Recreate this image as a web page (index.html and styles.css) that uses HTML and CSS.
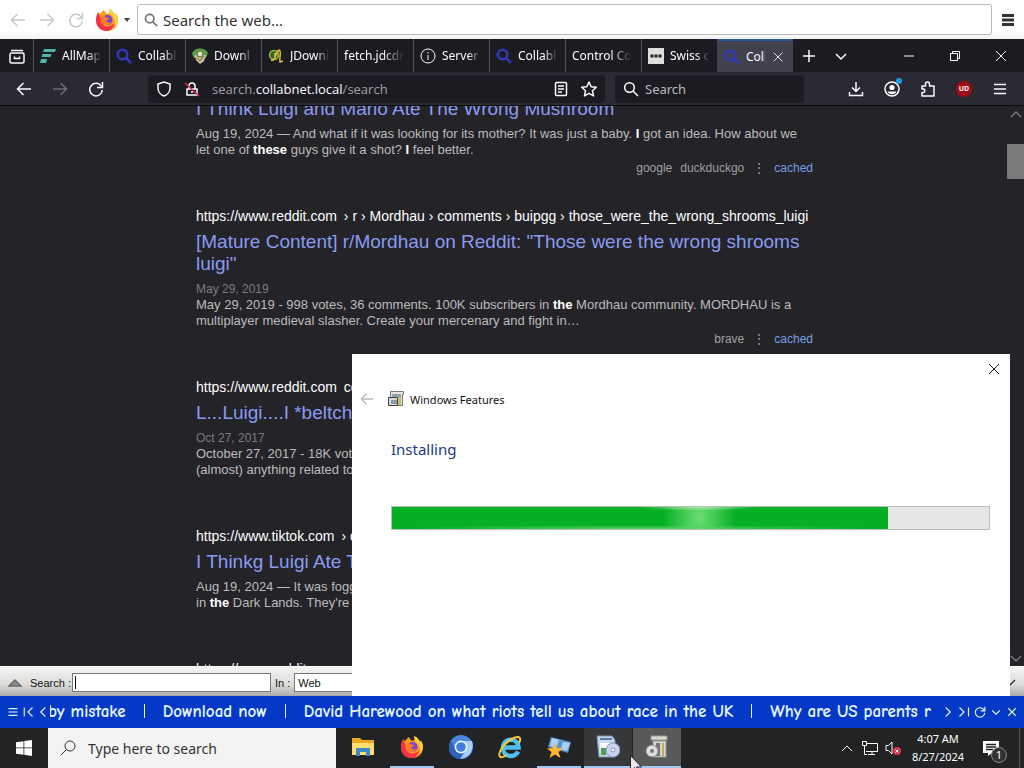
FILE: index.html
```html
<!DOCTYPE html>
<html lang="en">
<head>
    <meta charset="UTF-8">
    <meta name="viewport" content="width=device-width, initial-scale=1.0">
    <title>Desktop</title>
    <link rel="stylesheet" href="styles.css">
</head>
<body>

    <!-- shared icons -->
    <svg class="defs" aria-hidden="true">
        <symbol id="i-back" viewBox="0 0 16 16"><path d="M15 8H1.5M7.5 2 1.5 8l6 6"/></symbol>
        <symbol id="i-forward" viewBox="0 0 16 16"><path d="M1 8h13.500M8.500 2l6 6-6 6"/></symbol>
        <symbol id="i-reload" viewBox="0 0 16 16"><path d="M13.500 5.500A6.300 6.300 0 1 0 14.300 9M14.500 1v5.500H9"/></symbol>
        <symbol id="i-search" viewBox="0 0 16 16"><circle cx="6.500" cy="6.500" r="4.800"/><path d="m10 10 5 5"/></symbol>
        <symbol id="i-down" viewBox="0 0 16 16"><path d="m3 6 5 5 5-5"/></symbol>
        <symbol id="i-up" viewBox="0 0 16 16"><path d="m3 11 5-5 5 5"/></symbol>
        <symbol id="i-close" viewBox="0 0 16 16"><path d="m3 3 10 10M13 3 3 13"/></symbol>
        <symbol id="i-menu" viewBox="0 0 16 16"><path d="M2 3.500h12M2 8h12M2 12.500h12"/></symbol>
        <symbol id="i-firefox" viewBox="0 0 24 24">
            <path fill="#ff9a1f" d="M12 23C5.500 23 1 18.500 1 12c0-3 1-6 2.500-8 .2 1 .6 1.700 1 2.200C6 4.500 7.500 3.800 8 2c2 1 2.500 2.500 3 3.500h3C15 4 14.500 2.500 14 1c4 1.500 5.500 4.500 6 6.500.6-.5.8-1.300.8-2C22.500 8 23 10 23 12c0 6.500-4.500 11-11 11z"/>
            <path fill="#ffd23a" d="M14 1c4 1.500 5.500 4.500 6 6.500.6-.5.8-1.300.8-2C23.500 9 23.500 15 20 19c1-5-1-10-4-12-1.500-2-1.500-4-2-6z"/>
            <path fill="#f5304a" d="M1 12c0-3 1-6 2.500-8 0 3 1.500 4 2 6-.5 6 4 9 8 8.500 3-.3 4.500-2 6-3C18 20 15.500 23 12 23 5.500 23 1 18.500 1 12z"/>
            <circle cx="12.500" cy="12" r="5" fill="#7545d8"/>
            <path fill="#ff7a24" d="M5 9c3-2 5-1 6.500.5 1.500.4 2.500 0 3 .5-.5 2-3 1.500-3.500 3 1.500 2 4 1.500 5.500.5C15 18 8 18 6.500 14 6 12 6 10.500 5 9z"/>
        </symbol>
    </svg>

    <div class="webbar">
        <button class="icon-btn faded" aria-label="Back"><svg><use href="#i-back"/></svg></button>
        <button class="icon-btn faded" aria-label="Forward"><svg><use href="#i-forward"/></svg></button>
        <button class="icon-btn faded" aria-label="Reload"><svg><use href="#i-reload"/></svg></button>
        <button class="engine" aria-label="Choose browser"><svg class="ff"><use href="#i-firefox"/></svg><span class="caret"></span></button>
        <div class="webbar-field">
            <svg><use href="#i-search"/></svg>
            <input type="text" aria-label="Search the web" placeholder="Search the web...">
        </div>
        <button class="icon-btn burger" aria-label="Menu"><svg><use href="#i-menu"/></svg></button>
    </div>

    <div class="tabs">
        <button class="firefox-view" aria-label="Firefox View"><svg viewBox="0 0 16 16"><rect x="1" y="5" width="14" height="10" rx="1.500"/><path d="M2 2.500h12M5.500 8.500v2h5v-2"/></svg></button>
        <button class="tab"><svg viewBox="0 0 16 16"><path fill="#50b5a5" stroke="none" d="M4 1h12l-1 3H3zM2.500 6h9l-1 3h-9zM1 11h6l-1 4H0z"/></svg><span>AllMap</span></button>
        <button class="tab"><svg class="blue"><use href="#i-search"/></svg><span>Collabl</span></button>
        <button class="tab"><svg viewBox="0 0 16 16"><path fill="#5c9c48" stroke="none" d="M0 6C2-1 13-1 16 5l-2 5H2z"/><path fill="#d4cab0" stroke="none" d="M3 7h11l-2 6-4 3-4-4z"/><circle cx="8" cy="6" r="3" fill="#e8e4d0" stroke="#6d8a4a"/><path d="m5 10 3 3 4-5" stroke="#a0764a"/></svg><span>Downl</span></button>
        <button class="tab"><svg viewBox="0 0 16 16"><circle cx="6" cy="7" r="4.500" fill="#326330" stroke="#9cb43e"/><path d="M3 12c5 2 4-8 8-10 3 1 0 7 1 12l3-1M7 5v5" stroke="#d8c632"/></svg><span>JDowni</span></button>
        <button class="tab"><span>fetch.jdcdn</span></button>
        <button class="tab"><svg class="thin" viewBox="0 0 16 16"><circle cx="8" cy="8" r="7"/><path d="M8 7v5M8 4v1.500"/></svg><span>Server</span></button>
        <button class="tab"><svg class="blue"><use href="#i-search"/></svg><span>Collabl</span></button>
        <button class="tab"><span>Control Co</span></button>
        <button class="tab"><svg viewBox="0 0 16 16"><path fill="#ddd" stroke="none" d="M0 0h16v16H0z"/><path stroke="#222" stroke-width="3" stroke-dasharray="3 1" d="M2.500 8h11"/></svg><span>Swiss c</span></button>
        <div class="tab active"><svg class="blue"><use href="#i-search"/></svg><span>Coll</span><button aria-label="Close tab"><svg><use href="#i-close"/></svg></button></div>
        <button class="tab-tool" aria-label="New tab"><svg viewBox="0 0 16 16"><path d="M8 2v12M2 8h12"/></svg></button>
        <button class="tab-tool" aria-label="List tabs"><svg><use href="#i-down"/></svg></button>
        <div class="window-btns">
            <button aria-label="Minimize"><svg viewBox="0 0 16 16"><path d="M3 8h10"/></svg></button>
            <button aria-label="Restore"><svg viewBox="0 0 16 16"><path d="M3.500 5.500h7v7h-7zM5.500 5V3.500h7v7H11"/></svg></button>
            <button aria-label="Close"><svg><use href="#i-close"/></svg></button>
        </div>
    </div>

    <div class="navbar">
        <button class="icon-btn" aria-label="Back"><svg><use href="#i-back"/></svg></button>
        <button class="icon-btn dim" aria-label="Forward"><svg><use href="#i-forward"/></svg></button>
        <button class="icon-btn" aria-label="Reload"><svg><use href="#i-reload"/></svg></button>
        <div class="urlbar">
            <svg viewBox="0 0 16 16"><path d="M8 1l6 2v4c0 4-3 7-6 8-3-1-6-4-6-8V3z"/></svg>
            <svg viewBox="0 0 16 16"><path d="M3 8h10v6H3zM5 8V5a3 3 0 0 1 6 0v3M8 10v2"/><path stroke="#e22850" d="m1 2 14 13"/></svg>
            <span class="url">search.<b>collabnet.local</b>/search</span>
            <svg viewBox="0 0 16 16"><rect x="2.500" y="1.500" width="11" height="13" rx="1"/><path d="M5 5h6M5 8h6M5 11h4"/></svg>
            <svg viewBox="0 0 16 16"><path stroke-linejoin="round" d="m8 1 2.200 4.700 5.100.6-3.800 3.500 1 5.100L8 12.400l-4.500 2.500 1-5.100L.7 6.300l5.100-.6z"/></svg>
        </div>
        <div class="quick">
            <svg><use href="#i-search"/></svg>
            <input type="text" aria-label="Search" placeholder="Search">
        </div>
        <div class="nav-tools">
            <button class="icon-btn" aria-label="Downloads"><svg viewBox="0 0 16 16"><path d="M8 1v9M4 6.500 8 10.500l4-4M1.500 11v3.500h13V11"/></svg></button>
            <button class="icon-btn" aria-label="Account"><svg viewBox="0 0 16 16"><circle cx="8" cy="8" r="7"/><circle cx="8" cy="6.500" r="2.600" fill="#fff" stroke="none"/><path fill="#fff" stroke="none" d="M3.500 10.500h9C11 14 5 14 3.500 10.500z"/></svg><span class="dot"></span></button>
            <button class="icon-btn" aria-label="Extensions"><svg viewBox="0 0 16 16"><path stroke-linejoin="round" d="M2 5h3.500V3a2 2 0 0 1 4 0v2H14v10H2v-3.500h1.500a1.800 1.800 0 0 0 0-3.500H2z"/></svg></button>
            <button class="icon-btn" aria-label="uBlock"><span class="ublock">UD</span></button>
            <button class="icon-btn" aria-label="Menu"><svg><use href="#i-menu"/></svg></button>
        </div>
    </div>

    <div class="page">
        <div class="results">
            <div class="result">
                <h3><a href="#">I Think Luigi and Mario Ate The Wrong Mushroom</a></h3>
                <p>Aug 19, 2024 — And what if it was looking for its mother? It was just a baby. <b>I</b> got an idea. How about we<br>let one of <b>these</b> guys give it a shot? <b>I</b> feel better.</p>
                <div class="engines"><span>google</span><span>duckduckgo</span><i>⋮</i><a href="#">cached</a></div>
            </div>
            <div class="result">
                <div class="link">https://www.reddit.com<span>› r › Mordhau › comments › buipgg › those_were_the_wrong_shrooms_luigi</span></div>
                <h3><a href="#">[Mature Content] r/Mordhau on Reddit: "Those were the wrong shrooms<br>luigi"</a></h3>
                <time>May 29, 2019</time>
                <p>May 29, 2019 - 998 votes, 36 comments. 100K subscribers in <b>the</b> Mordhau community. MORDHAU is a<br>multiplayer medieval slasher. Create your mercenary and fight in…</p>
                <div class="engines"><span>brave</span><i>⋮</i><a href="#">cached</a></div>
            </div>
            <div class="result">
                <div class="link">https://www.reddit.com<span>comments</span></div>
                <h3><a href="#">L...Luigi....I *beltch*</a></h3>
                <time>Oct 27, 2017</time>
                <p>October 27, 2017 - 18K votes<br>(almost) anything related to</p>
                <div class="engines"><span>brave</span><i>⋮</i><a href="#">cached</a></div>
            </div>
            <div class="result">
                <div class="link">https://www.tiktok.com<span>› discover</span></div>
                <h3><a href="#">I Thinkg Luigi Ate The</a></h3>
                <p>Aug 19, 2024 — It was foggy<br>in <b>the</b> Dark Lands. They're</p>
                <div class="engines"><span>google</span><i>⋮</i><a href="#">cached</a></div>
            </div>
            <div class="result">
                <div class="link">https://www.reddit.com</div>
            </div>
        </div>
        <div class="scrollbar">
            <svg><use href="#i-up"/></svg>
            <div class="thumb"></div>
            <svg><use href="#i-down"/></svg>
        </div>
    </div>

    <div class="findbar">
        <svg viewBox="0 0 16 10"><path fill="#8c8c86" stroke="#666" d="M1 8.500 8 1.500l7 7z"/></svg>
        <label for="find">Search :</label>
        <input type="text" id="find">
        <label for="where">In :</label>
        <select id="where"><option>Web</option></select>
        <svg class="grip" viewBox="0 0 8 8"><path stroke="#333" d="M0 8 7 1"/></svg>
    </div>

    <div class="ticker">
        <div class="ticker-btns">
            <button aria-label="Menu"><svg><use href="#i-menu"/></svg></button>
            <button aria-label="First"><svg viewBox="0 0 16 16"><path d="M3 2v12M14 2 8 8l6 6"/></svg></button>
            <button aria-label="Previous"><svg viewBox="0 0 16 16"><path d="M11 2 5 8l6 6"/></svg></button>
        </div>
        <div class="headlines">
            <a href="#">by mistake</a>
            <a href="#">Download now</a>
            <a href="#">David Harewood on what riots tell us about race in the UK</a>
            <a href="#">Why are US parents r</a>
        </div>
        <div class="ticker-btns wide">
            <button aria-label="Next"><svg viewBox="0 0 16 16"><path d="m5 2 6 6-6 6"/></svg></button>
            <button aria-label="Last"><svg viewBox="0 0 16 16"><path d="m2 2 6 6-6 6M14 2v12"/></svg></button>
            <button aria-label="Refresh"><svg><use href="#i-reload"/></svg></button>
            <button aria-label="Collapse"><svg><use href="#i-down"/></svg></button>
            <button aria-label="Close"><svg><use href="#i-close"/></svg></button>
        </div>
    </div>

    <div class="taskbar">
        <button class="start" aria-label="Start"><svg viewBox="0 0 16 16"><path fill="#fff" stroke="none" d="M0 2.300 7.500 1.200v6.300H0zM8.300 1.100 16 0v7.500H8.300zM0 8.300h7.500v6.400L0 13.700zM8.300 8.300H16V16l-7.700-1.200z"/></svg></button>
        <div class="start-search">
            <svg viewBox="0 0 16 16"><circle cx="10" cy="6" r="5"/><path d="M6.500 9.500.8 15.200"/></svg>
            <input type="text" aria-label="Type here to search" placeholder="Type here to search">
        </div>
        <div class="apps">
            <button aria-label="File Explorer"><svg viewBox="0 0 24 24"><path fill="#e9a820" d="M1 3h8l2 2h12v15H1z"/><path fill="#ffdc70" d="M1 8h22v12H1z"/><path fill="#3f86c8" d="M5 21v-8h14v8h-4v-4H9v4z"/></svg></button>
            <button class="open" aria-label="Firefox"><svg><use href="#i-firefox"/></svg></button>
            <button aria-label="Chromium"><svg viewBox="0 0 24 24"><circle cx="12" cy="12" r="12" fill="#4a86dc"/><path fill="#a9ccf8" d="M12 6h11c3 8-3 18-12 18l6-9z"/><path fill="#2f62bb" d="m2 6 5 9c2 4 6 3 8 2l-4 7C1 23-3 13 2 6z"/><circle cx="12" cy="12" r="6.500" fill="#eef5ff"/><circle cx="12" cy="12" r="4.800" fill="#3f7fdf"/></svg></button>
            <button aria-label="Internet Explorer"><svg viewBox="0 0 24 24"><path fill="none" stroke="#4fc0ee" stroke-width="4.500" d="M6 12.500h14.500C20 2 5.500 2 5 12.500c-.5 10 12 11 15 4"/><path fill="none" stroke="#f5ca32" stroke-width="2" d="M21 8c4-8-3-7-9-3C4 10-1 20 2.500 22c2 1 4-.5 6-2"/></svg></button>
            <button class="open" aria-label="Ticker"><svg viewBox="0 0 24 24"><path fill="#5a95d0" d="m4 2 20 5-3 11L1 12z"/><path fill="#a9d2f2" d="m5 3 7 2-3 8-6-2zM16 7l7 1-3 8-6-2z"/><path fill="#ffb52e" d="m8 8 2 5 6 .5-4.500 3.500 2 6L8 19.500 2.500 23l2-6L0 13.500 6 13z"/></svg></button>
            <button class="open hover" aria-label="Installer"><svg viewBox="0 0 24 24"><path fill="#c9d8e8" stroke="#7892b0" d="M1 1h15l3 4v17H3z"/><path fill="#5878a8" d="M4 3h12v2H4z"/><path fill="#fff" d="M4 8h13v11H5z"/><path fill="#4da050" d="M5 13h5v7H5z"/><circle cx="17" cy="15" r="7" fill="#cbd2f1" stroke="#8290bd"/><circle cx="17" cy="15" r="2" fill="#fff" stroke="#8290bd"/></svg></button>
            <button class="open current" aria-label="Windows Features"><svg viewBox="0 0 24 24"><path fill="#d8d8d2" stroke="#999" d="M6 1h16v4H6zM8 6h13v16H8z"/><path fill="#777" d="M11 8h4v13h-4z"/><path fill="#c8a850" d="M17 8h2v13h-2z"/><circle cx="7" cy="16" r="6" fill="#dedede" stroke="#888"/><circle cx="7" cy="16" r="2" fill="#777"/></svg></button>
        </div>
        <div class="tray">
            <svg><use href="#i-up"/></svg>
            <svg viewBox="0 0 16 16"><path d="M5 3.500h10.500v8H4M10 12v3M6 14.500h7M.5 1.500h4v4h-4zM2.500 6v8.500H5"/></svg>
            <svg viewBox="0 0 16 16"><path d="M1 5.500h2.500L7 2v12l-3.500-3.500H1z"/><circle cx="12" cy="11" r="4" fill="#d8344a" stroke="none"/><path d="m10.500 9.500 3 3m0-3-3 3"/></svg>
        </div>
        <div class="clock">4:07 AM<br>8/27/2024</div>
        <button class="notify" aria-label="Notifications"><svg viewBox="0 0 16 16"><path fill="#fff" stroke="none" d="M0 1h16v12H9l-4 3v-3H0z"/><path stroke="#222" d="M3 4.500h10M3 7h10M3 9.500h7"/></svg><span class="count">1</span></button>
    </div>

    <div class="dialog" role="dialog" aria-label="Windows Features">
        <button class="dialog-close" aria-label="Close"><svg><use href="#i-close"/></svg></button>
        <div class="dialog-head">
            <button class="icon-btn" aria-label="Back"><svg><use href="#i-back"/></svg></button>
            <svg class="feature" viewBox="0 0 16 16"><path fill="#e6e6dc" stroke="#777" d="M2.500.5h13v3h-1v11h-12z"/><path fill="#8ca0b0" d="M4 3h9v3H4z"/><path fill="#c8bc70" d="M9 6h4v8H9z"/><path fill="#d8d8d8" stroke="#444" d="M.5 6.500h9v8h-9z"/><path fill="#8a98a4" d="M3 9h6v4H3z"/></svg>
            <span>Windows Features</span>
        </div>
        <h2>Installing</h2>
        <div class="progress" role="progressbar" aria-valuenow="83" aria-label="Installing">
            <div class="progress-fill" style="width: 83%"></div>
        </div>
    </div>

    <svg class="cursor" viewBox="0 0 12 19"><path fill="#e8e8e8" stroke="#222" d="M.5.5v16l4-4 3 6 2-1-3-5.500h5z"/></svg>

</body>
</html>
```
FILE: styles.css
```css
* {
    box-sizing: border-box;
}
body {
    margin: 0;
    height: 100vh;
    display: flex;
    flex-direction: column;
    position: relative;
    overflow: hidden;
    font-family: "Noto Sans", sans-serif;
    font-size: 12px;
    background: #232328;
    color: #fbfbfe;
}
.defs {
    position: absolute;
    width: 0;
    height: 0;
}
svg {
    width: 16px;
    height: 16px;
    flex: none;
    fill: none;
    stroke: currentColor;
    stroke-width: 1.5;
}
symbol#i-firefox {
    stroke: none;
}
button {
    padding: 0;
    border: none;
    background: none;
    color: inherit;
    font: inherit;
    display: flex;
    align-items: center;
    justify-content: center;
}
input, select {
    min-width: 0;
    padding: 0;
    border: none;
    outline: none;
    background: none;
    color: inherit;
    font: inherit;
}
input::placeholder {
    color: inherit;
    opacity: 1;
}
a {
    text-decoration: none;
}
.icon-btn {
    position: relative;
    width: 36px;
    height: 28px;
}

/* search bar on top of the desktop */
.webbar {
    height: 39px;
    flex: none;
    display: flex;
    align-items: center;
    padding-left: 3px;
    background: linear-gradient(#fff 80%, #f2f2f2);
    color: #333;
}
.webbar .icon-btn {
    width: 29px;
}
.webbar .faded {
    color: #c8c8c8;
}
.engine {
    width: 44px;
    gap: 5px;
}
.ff {
    width: 24px;
    height: 24px;
}
.caret {
    border: 3px solid transparent;
    border-top: 4px solid #444;
    border-bottom: none;
}
.webbar-field {
    flex: 1;
    height: 31px;
    margin-left: 3px;
    display: flex;
    align-items: center;
    gap: 5px;
    padding-left: 6px;
    border: 1px solid #bbb;
    border-radius: 3px;
    background: #fff;
}
.webbar-field svg {
    width: 14px;
    height: 14px;
    color: #777;
    stroke-width: 2;
}
.webbar-field input {
    flex: 1;
    font-size: 15px;
}
.webbar .burger {
    width: 32px;
}
.burger svg {
    stroke-width: 3;
}

/* tab strip */
.tabs {
    height: 33px;
    flex: none;
    display: flex;
    background: #1c1b22;
}
.firefox-view {
    width: 33px;
}
.tab {
    width: 76px;
    display: flex;
    align-items: center;
    justify-content: flex-start;
    gap: 6px;
    padding: 0 4px 0 6px;
    border-left: 1px solid #55555c;
    overflow: hidden;
    white-space: nowrap;
}
.tab span {
    flex: 1;
    overflow: hidden;
    text-align: left;
    mask-image: linear-gradient(to right, #000 60%, transparent 92%);
}
.tab .blue {
    color: #3238b8;
    stroke-width: 2.5;
}
.tab .thin {
    stroke-width: 1;
}
.tab.active {
    background: #42414d;
    border-left-color: #42414d;
    border-top: 2px solid #2a5a9c;
    padding-right: 8px;
}
.tab.active span {
    mask-image: none;
}
.tab.active button svg {
    width: 14px;
    height: 14px;
    stroke-width: 1;
}
.tab-tool {
    width: 32px;
}
.window-btns {
    flex: 1;
    display: flex;
    justify-content: flex-end;
}
.window-btns button {
    width: 46px;
}
.window-btns svg {
    stroke-width: 1;
}

/* address bar */
.navbar {
    height: 34px;
    flex: none;
    display: flex;
    align-items: center;
    padding: 0 6px;
    background: #2b2a33;
    border-bottom: 1px solid #0c0c0d;
}
.dim {
    color: #6d6c74;
}
.urlbar, .quick {
    height: 28px;
    display: flex;
    align-items: center;
    gap: 12px;
    padding: 0 8px;
    border-radius: 4px;
    background: #1c1b22;
    font-size: 13px;
}
.urlbar {
    flex: 1;
    margin: 0 10px 0 34px;
}
.url {
    flex: 1;
    font-family: "Open Sans", sans-serif;
    color: #a0a0a6;
}
.url b {
    font-weight: normal;
    color: #fbfbfe;
}
.quick {
    width: 189px;
    gap: 6px;
    color: #b8b8be;
}
.quick svg {
    color: #fff;
}
.quick input {
    flex: 1;
}
.nav-tools {
    display: flex;
    margin-left: 34px;
}
.dot {
    position: absolute;
    right: 8px;
    top: 3px;
    width: 6px;
    height: 6px;
    border-radius: 50%;
    background: #1f9be8;
}
.ublock {
    width: 16px;
    height: 16px;
    border-radius: 50%;
    background: #a00b14;
    font-size: 7px;
    line-height: 16px;
    font-weight: bold;
}

/* search results */
.page {
    flex: 1;
    min-height: 0;
    display: flex;
    justify-content: space-between;
    overflow: hidden;
    font-family: "Liberation Sans", sans-serif;
    font-size: 13px;
    color: #bcbcbc;
}
.results {
    width: 617px;
    margin: -8px 0 0 196px;
    white-space: nowrap;
}
.result {
    margin-bottom: 28px;
}
.link {
    height: 20px;
    line-height: 20px;
    margin-bottom: 5px;
    font-size: 14px;
    color: #fff;
}
.link span {
    margin-left: 7px;
}
.result h3 {
    margin: 0 0 6px;
    font-size: 19px;
    line-height: 22px;
    font-weight: normal;
}
.result h3 a {
    color: #8a9bf0;
}
.result time {
    display: block;
    margin-top: 7px;
    font-size: 12px;
    line-height: 15px;
    color: #7c7c80;
}
.result p {
    margin: 0;
    line-height: 16px;
}
.result p b {
    color: #fff;
}
.engines {
    display: flex;
    justify-content: flex-end;
    gap: 8px;
    font-size: 12px;
    line-height: 20px;
    color: #a0a0a0;
}
.engines i {
    width: 14px;
    text-align: center;
    font-style: normal;
}
.engines a {
    color: #7a9ee0;
}
.scrollbar {
    width: 17px;
    display: flex;
    flex-direction: column;
    align-items: center;
    color: #77777c;
}
.thumb {
    width: 17px;
    height: 35px;
    margin: 22px 0 auto;
    background: #7b7b7e;
}

/* find toolbar */
.findbar {
    height: 30px;
    flex: none;
    display: flex;
    align-items: center;
    padding: 2px 8px 0;
    border-top: 1px solid #fff;
    background: linear-gradient(#f4f4f2, #dcdcda 60%, #aaa);
    font-family: "Liberation Sans", sans-serif;
    font-size: 11px;
    color: #111;
}
.findbar svg {
    width: 14px;
    height: 10px;
}
.findbar label {
    margin: 0 4px;
    white-space: nowrap;
}
.findbar label:first-of-type {
    width: 38px;
    margin-left: 8px;
}
.findbar input, .findbar select {
    height: 19px;
    padding-left: 3px;
    border: 1px solid #777;
    background: #fff;
    appearance: none;
}
/* text cursor at the start of the empty field */
.findbar input {
    width: 199px;
    background: linear-gradient(#111, #111) 2px 50% / 1px 13px no-repeat, #fff;
}
.findbar select {
    width: 160px;
}
.findbar .grip {
    width: 8px;
    margin: 0 0 0 auto;
}

/* news ticker */
.ticker {
    height: 32px;
    flex: none;
    display: flex;
    align-items: center;
    background: #0439c8;
    color: #e4f6ff;
}
.ticker-btns {
    display: flex;
    padding-left: 5px;
}
.ticker-btns button {
    width: 15px;
}
.ticker-btns svg {
    width: 12px;
    height: 12px;
}
.ticker-btns.wide {
    padding: 0 4px 0 0;
}
.ticker-btns.wide button {
    width: 16px;
}
.headlines {
    flex: 1;
    display: flex;
    justify-content: flex-start;
    overflow: hidden;
    font-family: "Comic Sans MS", "Comic Neue", "Noto Sans", sans-serif;
    font-size: 17px;
    font-weight: bold;
    line-height: 20px;
    white-space: nowrap;
}
.headlines a {
    flex: none;
    color: inherit;
}
.headlines a:first-child {
    margin-left: -2px;
}
.headlines a + a::before {
    content: "";
    display: inline-block;
    width: 1px;
    height: 14px;
    margin: 0 18px;
    vertical-align: -1px;
    background: #e4f6ff;
}

/* windows taskbar */
.taskbar {
    height: 40px;
    flex: none;
    display: flex;
    background: #222324;
    color: #fff;
}
.start {
    width: 48px;
}
.start-search {
    width: 288px;
    display: flex;
    align-items: center;
    gap: 12px;
    padding-left: 12px;
    background: #f3f3f3;
    color: #333;
    font-size: 14px;
}
.start-search svg {
    stroke-width: 1;
}
.start-search input {
    flex: 1;
}
.apps {
    flex: 1;
    display: flex;
    gap: 1px;
    margin-left: 3px;
}
.apps button {
    width: 48px;
    border-bottom: 2px solid transparent;
}
.apps svg {
    width: 24px;
    height: 24px;
    stroke-width: 1;
    stroke: none;
}
.apps .open {
    border-image: linear-gradient(to right, transparent 4px, #9cc8f2 4px 44px, transparent 44px) 2;
}
.apps .hover {
    background: #363738;
}
.apps .current {
    background: #58595a;
}
.apps .hover, .apps .current {
    border-image: none;
    border-bottom-color: #9cc8f2;
}
.tray {
    display: flex;
    align-items: center;
    gap: 7px;
}
.tray svg {
    stroke-width: 1;
}
.clock {
    width: 74px;
    padding-top: 2px;
    text-align: center;
    font-size: 11px;
    line-height: 18px;
    white-space: nowrap;
}
.notify {
    position: relative;
    width: 45px;
    margin-right: 4px;
    padding-right: 12px;
    border-right: 1px solid #555;
}
.count {
    position: absolute;
    right: 12px;
    bottom: 5px;
    width: 16px;
    height: 16px;
    border: 1px solid #888;
    border-radius: 50%;
    background: #333;
    font-size: 11px;
    line-height: 14px;
}

/* installer window floating over the browser */
.dialog {
    position: absolute;
    right: 14px;
    bottom: 72px;
    width: 658px;
    height: 342px;
    background: #fff;
    color: #111;
}
.dialog-close {
    width: 32px;
    height: 30px;
    margin-left: auto;
}
.dialog-close svg {
    stroke-width: 1;
}
.dialog-head {
    display: flex;
    align-items: center;
    height: 30px;
    font-size: 11px;
}
.dialog-head .icon-btn {
    width: 30px;
    color: #bbb;
}
.dialog-head .icon-btn svg {
    width: 14px;
}
.feature {
    margin: 0 6px;
    stroke-width: 1;
    stroke: none;
}
.dialog h2 {
    margin: 24px 39px 0;
    font-size: 15px;
    line-height: 22px;
    font-weight: normal;
    color: #1a3a82;
}
.progress {
    height: 24px;
    margin: 46px 20px 0 39px;
    border: 1px solid #bcbcbc;
    background: #e6e6e6;
}
.progress-fill {
    height: 100%;
    background:
        radial-gradient(ellipse 60px 4px at 62% 0, #a4e8a8, transparent),
        radial-gradient(ellipse 240px 4px at 50% 100%, #5cd468, transparent),
        radial-gradient(ellipse 36px 50px at 62% 50%, #6cdc74, transparent),
        #06b025;
}
.cursor {
    position: absolute;
    left: 630px;
    bottom: -6px;
    width: 12px;
    height: 19px;
    stroke-width: 1;
}
```
